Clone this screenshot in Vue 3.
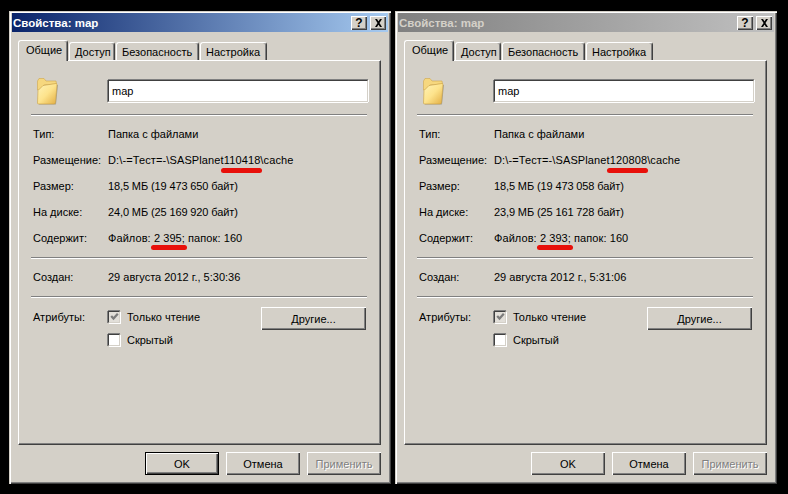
<template>
  <div class="desktop">
    <div v-for="win in windows" :key="win.id" class="window" :class="{ inactive: !win.active }">
      <div class="titlebar">
        <span class="title-text">Свойства: map</span>
        <div class="title-buttons">
          <button class="cap-btn help">?</button>
          <button class="cap-btn">
            <svg width="9" height="8" viewBox="0 0 9 8">
              <path d="M1 0L3 0L8 8L6 8ZM6 0L8 0L3 8L1 8Z" fill="#000" />
            </svg>
          </button>
        </div>
      </div>

      <div class="content">
        <div class="tabs">
          <div v-for="(tab, i) in tabs" :key="tab" class="tab" :class="{ selected: i === 0 }">{{ tab }}</div>
        </div>

        <div class="panel">
          <div class="head">
            <div class="icon-cell">
              <svg width="24" height="28" viewBox="0 0 24 28">
                <defs>
                  <linearGradient :id="'folder' + win.id" x1="0" y1="0" x2="1" y2="1">
                    <stop offset="0" stop-color="#fff3b8" />
                    <stop offset="0.5" stop-color="#fde38c" />
                    <stop offset="1" stop-color="#e2ad42" />
                  </linearGradient>
                </defs>
                <path d="M4 27.5L21 27.5L23 8L22 8L20 26L4 26Z" fill="#a8a498" />
                <path d="M2.5 4L4 1.5L9 1.5L11 4L21 4L21.5 7L9 8L4 13L2.5 13Z" fill="#f6d77e" stroke="#cfa64e" stroke-width="0.6" />
                <path d="M2.5 26L3 13.5L8 8.5L21 6.5Q22 6.5 22 7.5L20.5 25.5Q20.4 27 19 27L3.5 27Q2.5 27 2.5 26Z" :fill="'url(#folder' + win.id + ')'" stroke="#c99f42" stroke-width="0.6" />
              </svg>
            </div>
            <div class="name-input">map</div>
          </div>
          <div class="sep first"></div>

          <div v-for="row in win.rows" :key="row[0]" class="row">
            <span class="label">{{ row[0] }}</span>
            <span :class="row[2]">{{ row[1] }}</span>
          </div>
          <div class="sep"></div>

          <div class="row created">
            <span class="label">Создан:</span>
            <span>{{ win.created }}</span>
          </div>
          <div class="sep"></div>

          <div class="attrs">
            <span class="label attr-label">Атрибуты:</span>
            <div class="checks">
              <div class="check-line">
                <span class="box checked">
                  <svg width="9" height="9" viewBox="0 0 9 9">
                    <path d="M1.2 4L3.5 6.6L7.8 1.8" fill="none" stroke="#7c7c7c" stroke-width="2.2" />
                  </svg>
                </span>
                Только чтение
              </div>
              <div class="check-line"><span class="box"></span>Скрытый</div>
            </div>
            <button class="btn other">Другие...</button>
          </div>

          <i class="mark path-mark"></i>
          <i class="mark count-mark"></i>
        </div>

        <div class="actions">
          <button class="btn" :class="{ 'default-btn': win.active }">OK</button>
          <button class="btn">Отмена</button>
          <button class="btn disabled">Применить</button>
        </div>
      </div>
    </div>
  </div>
</template>

<script setup>
const tabs = ['Общие', 'Доступ', 'Безопасность', 'Настройка']

const windows = [
  {
    id: 1,
    active: true,
    created: '29 августа 2012 г., 5:30:36',
    rows: [
      ['Тип:', 'Папка с файлами'],
      ['Размещение:', 'D:\\-=Тест=-\\SASPlanet110418\\cache', 'wide'],
      ['Размер:', '18,5 МБ (19 473 650 байт)', 'tight'],
      ['На диске:', '24,0 МБ (25 169 920 байт)', 'tight'],
      ['Содержит:', 'Файлов: 2 395; папок: 160', 'wide-s']
    ]
  },
  {
    id: 2,
    active: false,
    created: '29 августа 2012 г., 5:31:06',
    rows: [
      ['Тип:', 'Папка с файлами'],
      ['Размещение:', 'D:\\-=Тест=-\\SASPlanet120808\\cache', 'wide'],
      ['Размер:', '18,5 МБ (19 473 058 байт)', 'tight'],
      ['На диске:', '23,9 МБ (25 161 728 байт)', 'tight'],
      ['Содержит:', 'Файлов: 2 393; папок: 160', 'wide-s']
    ]
  }
]
</script>

<style>
html, body {
  margin: 0;
  background: #000;
}
</style>

<style scoped>
.desktop {
  display: flex;
  gap: 4px;
  width: 788px;
  height: 494px;
  box-sizing: border-box;
  padding: 11px 0 0 9px;
  background: #000;
  font-family: "Liberation Sans", Arial, sans-serif;
  font-size: 11px;
  color: #000;
}
.window {
  width: 382px;
  height: 473px;
  box-sizing: border-box;
  padding: 2px 3px 3px 3px;
  background: #d4d0c8;
  box-shadow: inset 1px 1px 0 #d4d0c8, inset 2px 2px 0 #fff, inset -1px -1px 0 #404040, inset -2px -2px 0 #808080;
}
.titlebar {
  display: flex;
  align-items: center;
  justify-content: space-between;
  height: 19px;
  padding: 0 2px 0 1px;
  background: linear-gradient(90deg, #0a246a, #a6caf0);
  color: #fff;
  font-size: 11.5px;
  font-weight: 700;
}
.inactive .titlebar {
  background: linear-gradient(90deg, #808080, #c0c0c0);
  color: #d4d0c8;
}
.title-buttons {
  display: flex;
  gap: 3px;
}
.cap-btn {
  display: flex;
  align-items: center;
  justify-content: center;
  width: 16px;
  height: 14px;
  padding: 0;
  border: 0;
  background: #d4d0c8;
  box-shadow: inset 1px 1px 0 #fff, inset -1px -1px 0 #404040, inset -2px -2px 0 #808080;
  font: 700 12px "Liberation Sans", Arial, sans-serif;
  color: #000;
}
.content {
  padding: 8px 7px 0 6px;
}
.tabs {
  display: flex;
  align-items: flex-end;
  height: 20px;
  position: relative;
  z-index: 1;
}
.tab {
  height: 18px;
  box-sizing: border-box;
  padding: 2px 4px 0 5px;
  margin-right: 1px;
  line-height: 14px;
  border-radius: 3px 3px 0 0;
  border-top: 1px solid #fff;
  border-left: 1px solid #fff;
  border-right: 1px solid #404040;
  box-shadow: inset -1px 0 0 #808080;
  white-space: nowrap;
}
.tab:nth-child(1) {
  width: 50px;
}
.tab:nth-child(2) {
  width: 46px;
}
.tab:nth-child(3) {
  width: 83px;
}
.tab:nth-child(4) {
  width: 67px;
}
.tab.selected {
  height: 21px;
  margin-bottom: -1px;
  padding: 2px 0 0 7px;
  background: #d4d0c8;
}
.panel {
  position: relative;
  width: 363px;
  height: 385px;
  box-sizing: border-box;
  padding: 20px 12px 0 12px;
  border-top: 1px solid #fff;
  border-left: 1px solid #fff;
  border-right: 1px solid #404040;
  border-bottom: 1px solid #404040;
  box-shadow: inset -1px -1px 0 #808080;
}
.head {
  display: flex;
  align-items: center;
  height: 22px;
  margin-top: -1px;
}
.icon-cell {
  display: flex;
  width: 77px;
  padding-left: 4px;
  box-sizing: border-box;
}
.name-input {
  width: 260px;
  height: 22px;
  box-sizing: border-box;
  padding: 0 3px;
  line-height: 20px;
  background: #fff;
  border-top: 1px solid #404040;
  border-left: 1px solid #404040;
  border-right: 1px solid #d4d0c8;
  border-bottom: 1px solid #d4d0c8;
  box-shadow: 0 1px 0 #fff, 1px 0 0 #fff, -1px 0 0 #808080, 0 -1px 0 #808080;
}
.sep {
  width: 336px;
  height: 1px;
  margin-top: 6px;
  background: #808080;
  border-bottom: 1px solid #fff;
}
.sep.first {
  margin-top: 12px;
}
.row {
  display: flex;
  align-items: center;
  height: 26px;
  padding-left: 2px;
  white-space: nowrap;
}
.row:nth-child(3) {
  margin-top: 5px;
}
.wide {
  letter-spacing: 0.12px;
}
.wide-s {
  letter-spacing: 0.08px;
}
.tight {
  letter-spacing: -0.12px;
}
.label {
  width: 75px;
  flex: none;
}
.created {
  margin-top: 5px;
}
.attrs {
  display: flex;
  align-items: flex-start;
  margin-top: 9px;
  padding-left: 2px;
}
.attr-label {
  line-height: 20px;
}
.checks {
  display: flex;
  flex-direction: column;
  gap: 10px;
  width: 153px;
  padding-top: 3px;
}
.check-line {
  display: flex;
  align-items: center;
  gap: 6px;
  height: 13px;
}
.box {
  display: flex;
  align-items: center;
  justify-content: center;
  width: 12px;
  height: 12px;
  box-sizing: border-box;
  margin-right: 1px;
  background: #fff;
  border-top: 1px solid #404040;
  border-left: 1px solid #404040;
  border-right: 1px solid #d4d0c8;
  border-bottom: 1px solid #d4d0c8;
  box-shadow: 1px 1px 0 #fff, -1px 0 0 #808080, 0 -1px 0 #808080;
}
.box.checked {
  background: #e2dfd9;
}
.btn {
  width: 74px;
  height: 23px;
  padding: 0;
  box-sizing: border-box;
  background: #d4d0c8;
  border: 0;
  box-shadow: inset 1px 1px 0 #fff, inset -1px -1px 0 #404040, inset -2px -2px 0 #808080;
  font: 11px "Liberation Sans", Arial, sans-serif;
  color: #000;
}
.btn.other {
  width: 105px;
}
.btn.default-btn {
  border: 1px solid #000;
}
.btn.disabled {
  color: #808080;
  text-shadow: 1px 1px 0 #fff;
}
.actions {
  display: flex;
  justify-content: flex-end;
  gap: 7px;
  width: 363px;
  margin-top: 7px;
}
.mark {
  position: absolute;
  height: 5px;
  border-radius: 3px;
  background: #e8100a;
}
.path-mark {
  left: 202px;
  top: 107px;
  width: 41px;
}
.count-mark {
  left: 132px;
  top: 184px;
  width: 36px;
}
</style>
